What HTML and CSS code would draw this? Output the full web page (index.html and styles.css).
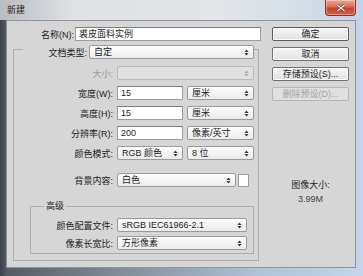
FILE: index.html
```html
<!DOCTYPE html>
<html lang="zh-CN">
<head>
    <meta charset="UTF-8">
    <title>新建</title>
    <link rel="stylesheet" href="styles.css">
</head>
<body>
<div class="window">
    <div class="titlebar">
        <span class="title">新建</span>
        <span class="close">
            <svg viewBox="0 0 10 8" width="10" height="8">
                <path d="M1.5 1 L8.5 7 M8.5 1 L1.5 7" stroke="#7a2a20" stroke-width="2.6"/>
                <path d="M1.5 1 L8.5 7 M8.5 1 L1.5 7" stroke="#fff" stroke-width="1.4"/>
            </svg>
        </span>
    </div>
    <div class="client">
        <div class="main">
            <div class="row name-row">
                <label class="lbl">名称(N):</label>
                <div class="field name-field">裘皮面料实例</div>
            </div>

            <div class="group">
                <div class="row head">
                    <label class="lbl">文档类型:</label>
                    <div class="select w-head">自定<svg class="arr" viewBox="0 0 5 7"><path d="M0.4 3 L2.5 0.6 L4.6 3 Z M0.4 4 L2.5 6.4 L4.6 4 Z"/></svg></div>
                </div>

                <div class="rows">
                    <div class="row">
                        <label class="lbl disabled">大小:</label>
                        <div class="select off w-full"><svg class="arr" viewBox="0 0 5 7"><path d="M0.4 3 L2.5 0.6 L4.6 3 Z M0.4 4 L2.5 6.4 L4.6 4 Z"/></svg></div>
                    </div>
                    <div class="row">
                        <label class="lbl">宽度(W):</label>
                        <div class="field w-num">15</div>
                        <div class="select w-unit">厘米<svg class="arr" viewBox="0 0 5 7"><path d="M0.4 3 L2.5 0.6 L4.6 3 Z M0.4 4 L2.5 6.4 L4.6 4 Z"/></svg></div>
                    </div>
                    <div class="row">
                        <label class="lbl">高度(H):</label>
                        <div class="field w-num">15</div>
                        <div class="select w-unit">厘米<svg class="arr" viewBox="0 0 5 7"><path d="M0.4 3 L2.5 0.6 L4.6 3 Z M0.4 4 L2.5 6.4 L4.6 4 Z"/></svg></div>
                    </div>
                    <div class="row">
                        <label class="lbl">分辨率(R):</label>
                        <div class="field w-num">200</div>
                        <div class="select w-unit">像素/英寸<svg class="arr" viewBox="0 0 5 7"><path d="M0.4 3 L2.5 0.6 L4.6 3 Z M0.4 4 L2.5 6.4 L4.6 4 Z"/></svg></div>
                    </div>
                    <div class="row">
                        <label class="lbl">颜色模式:</label>
                        <div class="select w-num">RGB 颜色<svg class="arr" viewBox="0 0 5 7"><path d="M0.4 3 L2.5 0.6 L4.6 3 Z M0.4 4 L2.5 6.4 L4.6 4 Z"/></svg></div>
                        <div class="select w-unit">8 位<svg class="arr" viewBox="0 0 5 7"><path d="M0.4 3 L2.5 0.6 L4.6 3 Z M0.4 4 L2.5 6.4 L4.6 4 Z"/></svg></div>
                    </div>
                </div>

                <div class="row bg-row">
                    <label class="lbl">背景内容:</label>
                    <div class="select w-bg">白色<svg class="arr" viewBox="0 0 5 7"><path d="M0.4 3 L2.5 0.6 L4.6 3 Z M0.4 4 L2.5 6.4 L4.6 4 Z"/></svg></div>
                    <div class="swatch"></div>
                </div>

                <fieldset class="adv">
                    <legend>高级</legend>
                    <div class="row">
                        <label class="lbl">颜色配置文件:</label>
                        <div class="select w-adv">sRGB IEC61966-2.1<svg class="arr" viewBox="0 0 5 7"><path d="M0.4 3 L2.5 0.6 L4.6 3 Z M0.4 4 L2.5 6.4 L4.6 4 Z"/></svg></div>
                    </div>
                    <div class="row">
                        <label class="lbl">像素长宽比:</label>
                        <div class="select w-adv">方形像素<svg class="arr" viewBox="0 0 5 7"><path d="M0.4 3 L2.5 0.6 L4.6 3 Z M0.4 4 L2.5 6.4 L4.6 4 Z"/></svg></div>
                    </div>
                </fieldset>
            </div>
        </div>

        <div class="side">
            <button class="btn default">确定</button>
            <button class="btn">取消</button>
            <button class="btn">存储预设(S)...</button>
            <button class="btn" disabled>删除预设(D)...</button>
            <div class="info">
                <div>图像大小:</div>
                <div class="size">3.99M</div>
            </div>
        </div>
    </div>
</div>
</body>
</html>
```

FILE: styles.css
```css
* {
    box-sizing: border-box;
}
body {
    margin: 0;
    font-family: "Liberation Sans", "Noto Sans CJK SC", sans-serif;
    font-size: 9px;
    color: #1c1c1c;
}
.window {
    width: 363px;
    height: 276px;
    display: flex;
    flex-direction: column;
    background: linear-gradient(to right, #3d4148 0, #575c64 7px, #848f9b 35%, #aec1d5 70%, #c4d7ea 100%);
}
.titlebar {
    height: 20px;
    flex: none;
    display: flex;
    justify-content: space-between;
    align-items: flex-start;
    padding: 0 7px 0 7px;
    background: linear-gradient(to right, #b9bdc2, #dfe1e4 20%, #e3e6e9 60%, #d2dce6 85%, #c2d3e4);
}
.title {
    line-height: 20px;
    font-family: "Noto Sans CJK SC", sans-serif;
    color: #222;
}
.close {
    width: 31px;
    height: 16px;
    display: flex;
    align-items: center;
    justify-content: center;
    border: 1px solid #8a3428;
    border-top: none;
    border-radius: 0 0 4px 4px;
    background: linear-gradient(#e9aa9c, #d96c57 45%, #c6452f 55%, #d0604a);
    box-shadow: inset 0 0 0 1px rgba(255, 255, 255, 0.35);
}
.client {
    flex: 1;
    margin: 0 7px 8px 6px;
    display: flex;
    background: #d6d6d6;
    border: 1px solid #8b949e;
}
.main {
    width: 255px;
    display: flex;
    flex-direction: column;
    padding-top: 6px;
}
.row {
    display: flex;
    align-items: center;
    height: 14px;
    gap: 4px;
}
.lbl {
    flex: none;
    text-align: right;
    white-space: nowrap;
}
.lbl.disabled {
    color: #9a9a9a;
}
.name-row {
    gap: 1px;
}
.name-row .lbl {
    width: 67px;
}
.field {
    height: 14px;
    line-height: 12px;
    padding-left: 3px;
    background: #fff;
    border: 1px solid #9c9c9c;
    border-top-color: #7d7d7d;
    white-space: nowrap;
}
.name-field {
    width: 186px;
}
.select {
    height: 14px;
    line-height: 12px;
    padding: 0 4px;
    display: flex;
    align-items: center;
    justify-content: space-between;
    background: linear-gradient(#fdfdfd, #ebebeb);
    border: 1px solid #9a9a9a;
    border-radius: 2px;
    white-space: nowrap;
}
.select.off {
    background: #dfdfdf;
    border-color: #bababa;
    justify-content: flex-end;
}
.arr {
    width: 5px;
    height: 7px;
    fill: #3a3a3a;
    flex: none;
}
.off .arr {
    fill: #a8a8a8;
}
.group {
    margin: 8px 0 0 6px;
    width: 246px;
    height: 212px;
    border: 1px solid #adadad;
}
.head {
    margin: -5px 0 0 9px;
    width: 231px;
    gap: 2px;
    background: #d6d6d6;
}
.head .lbl {
    width: 64px;
}
.w-head {
    width: 165px;
}
.rows {
    margin-top: 7px;
    display: flex;
    flex-direction: column;
    gap: 6px;
}
.rows .lbl,
.bg-row .lbl {
    width: 99px;
}
.w-full {
    width: 137px;
}
.w-num {
    width: 66px;
}
.w-unit {
    width: 67px;
}
.bg-row {
    margin-top: 13px;
    gap: 4px;
}
.w-bg {
    width: 119px;
}
.swatch {
    width: 11px;
    height: 13px;
    margin-left: -2px;
    background: #fff;
    border: 1px solid #9c9c9c;
}
.adv {
    margin: 12px 0 0 16px;
    width: 224px;
    min-width: 0;
    padding: 0 0 3px 0;
    border: 1px solid #adadad;
}
.adv legend {
    margin-left: 13px;
    padding: 0 2px;
    line-height: 14px;
    font-family: "Noto Sans CJK SC", sans-serif;
}
.adv .row {
    margin-top: 4px;
}
.adv legend + .row {
    margin-top: 5px;
}
.adv .lbl {
    width: 82px;
}
.w-adv {
    width: 130px;
}
.side {
    flex: 1;
    display: flex;
    flex-direction: column;
    gap: 6px;
    padding: 6px 0 0 10px;
}
.btn {
    width: 77px;
    height: 14px;
    padding: 0;
    font: inherit;
    line-height: 12px;
    color: #1c1c1c;
    background: linear-gradient(#f7f7f7, #e0e0e0);
    border: 1px solid #707070;
    border-radius: 2px;
    box-shadow: inset 0 0 0 1px #fbfbfb;
}
.btn.default {
    border-color: #5a5a5a;
}
.btn:disabled {
    color: #a3a3a3;
    border-color: #b5b5b5;
    background: #e0e0e0;
    box-shadow: none;
}
.info {
    width: 77px;
    margin-top: 71px;
    text-align: center;
    line-height: 14px;
}
.size {
    color: #444;
}
```
